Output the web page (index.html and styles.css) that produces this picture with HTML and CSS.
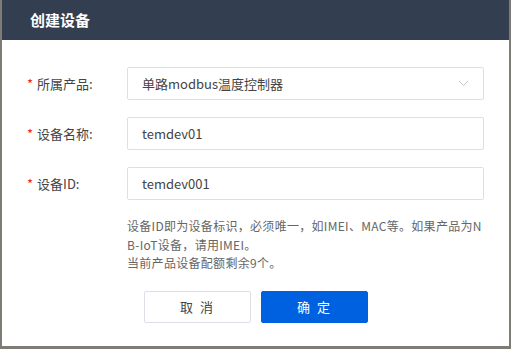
FILE: index.html
```html
<!DOCTYPE html>
<html lang="zh-CN">
<head>
  <meta charset="UTF-8" />
  <meta name="viewport" content="width=device-width, initial-scale=1.0" />
  <title>创建设备</title>
  <link rel="stylesheet" href="styles.css">
</head>
<body>
  <div class="dialog">
    <div class="dialog-header">创建设备</div>

    <div class="dialog-body">
      <div class="form-row">
        <label class="form-label"><span class="req">*</span>所属产品:</label>
        <div class="select">
          <span>单路modbus温度控制器</span>
          <svg class="arrow" width="11" height="7" viewBox="0 0 11 7">
            <path d="M1 1 L5.5 5.5 L10 1" fill="none" stroke="#c0c4cc" stroke-width="1"/>
          </svg>
        </div>
      </div>

      <div class="form-row">
        <label class="form-label"><span class="req">*</span>设备名称:</label>
        <input class="input" type="text" value="temdev01">
      </div>

      <div class="form-row">
        <label class="form-label"><span class="req">*</span>设备ID:</label>
        <input class="input" type="text" value="temdev001">
      </div>

      <p class="tip">设备ID即为设备标识，必须唯一，如IMEI、MAC等。如果产品为NB-IoT设备，请用IMEI。<br>当前产品设备配额剩余9个。</p>

      <div class="buttons">
        <button class="btn">取 消</button>
        <button class="btn btn-primary">确 定</button>
      </div>
    </div>
  </div>
</body>
</html>
```

FILE: styles.css
```css
html, body {
  margin: 0;
  height: 100%;
}

body {
  background: #7f7c76;
  font-family: "Noto Sans CJK SC", "Noto Sans", sans-serif;
  color: #333;
}

.dialog {
  margin-left: 2px;
  width: 507px;
  height: 346px;
  background: white;
}

.dialog-header {
  height: 40px;
  line-height: 40px;
  background: #333f50;
  color: white;
  font-size: 15px;
  font-weight: bold;
  padding-left: 28px;
}

.dialog-body {
  padding: 27px 0 0 25px;
}

.form-row {
  display: flex;
  align-items: center;
  height: 33px;
  margin-bottom: 17px;
}

.form-label {
  width: 100px;
  font-size: 13px;
  color: #444;
}

.req {
  color: #f5222d;
  margin-right: 4px;
}

.select, .input {
  box-sizing: border-box;
  width: 357px;
  height: 33px;
  border: 1px solid #dcdfe6;
  border-radius: 2px;
  padding: 0 14px;
  font-family: inherit;
  font-size: 13px;
  color: #444;
  background: white;
}

.select {
  display: flex;
  align-items: center;
  justify-content: space-between;
}

.tip {
  margin: 17px 0 0 100px;
  width: 357px;
  font-size: 12px;
  line-height: 18.5px;
  letter-spacing: 0.3px;
  color: #666;
  word-break: break-all;
}

.buttons {
  display: flex;
  gap: 10px;
  margin: 18px 0 0 117px;
}

.btn {
  width: 107px;
  height: 32px;
  border: 1px solid #dcdfe6;
  border-radius: 2px;
  background: white;
  font-family: inherit;
  font-size: 13px;
  letter-spacing: 2px;
  color: #444;
  cursor: pointer;
}

.btn-primary {
  background: #0061e0;
  border-color: #0061e0;
  color: white;
}
```
